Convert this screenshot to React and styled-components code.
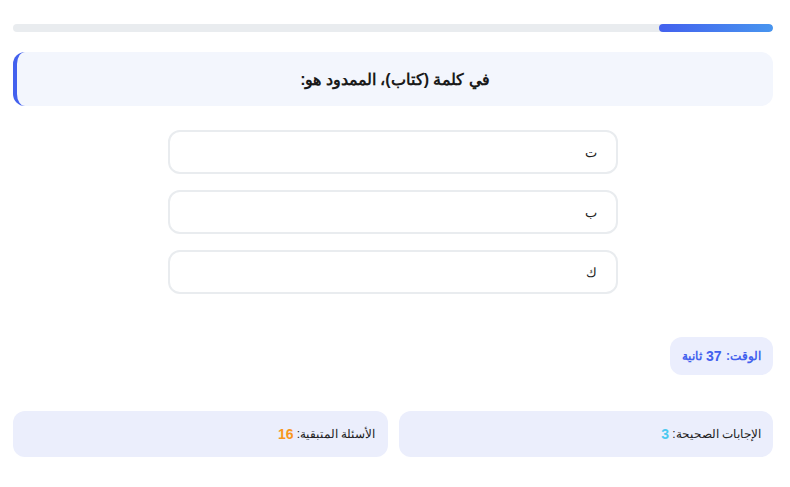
import React from "react";
import styled, { createGlobalStyle } from "styled-components";

const GlobalStyle = createGlobalStyle`
  body {
    margin: 0;
    background: #ffffff;
    font-family: "Liberation Sans", sans-serif;
    color: #222;
  }
`;

const Page = styled.div`
  direction: rtl;
  padding: 24px 17px 0 13px;
`;

const Track = styled.div`
  height: 8px;
  border-radius: 4px;
  background: #e9ecef;
  display: flex;
  overflow: hidden;
`;

const Fill = styled.div`
  height: 100%;
  border-radius: 4px;
  background: linear-gradient(to left, #4895ef, #4361ee);
`;

const Question = styled.div`
  margin-top: 20px;
  height: 54px;
  display: flex;
  align-items: center;
  justify-content: center;
  background: #f3f6fd;
  border-left: 4px solid #4361ee;
  border-radius: 12px;
  font-size: 16px;
  font-weight: bold;
  color: #1a1a1a;
`;

const Options = styled.div`
  width: 450px;
  margin: 24px auto 0;
  display: flex;
  flex-direction: column;
  gap: 16px;
`;

const Option = styled.button`
  height: 44px;
  box-sizing: border-box;
  border: 2px solid #e9ecef;
  border-radius: 12px;
  background: #fff;
  text-align: right;
  padding: 0 19px;
  font-family: inherit;
  font-size: 13px;
  color: #222;
  direction: rtl;
`;

const TimerRow = styled.div`
  margin-top: 43px;
  display: flex;
`;

const Timer = styled.div`
  height: 38px;
  padding: 0 12px;
  display: flex;
  align-items: center;
  background: #ebeefd;
  border-radius: 12px;
  font-size: 12px;
  font-weight: bold;
  color: #4361ee;
`;

const Num = styled.span`
  font-size: 14px;
  margin: 0 1px;
`;

const Stats = styled.div`
  margin-top: 36px;
  display: grid;
  grid-template-columns: 1fr 1fr;
  gap: 11px;
`;

const Stat = styled.div`
  height: 46px;
  display: flex;
  align-items: center;
  padding: 0 12px;
  background: #ebeefc;
  border-radius: 12px;
  font-size: 12px;
  color: #222;
`;

const Value = styled.span`
  font-size: 14px;
  font-weight: bold;
  color: ${(p) => p.$color};
`;

export default function App() {
  const progress = 15;
  const options = ["ت", "ب", "ك"];
  return (
    <>
      <GlobalStyle />
      <Page>
        <Track>
          <Fill style={{ width: `${progress}%` }} />
        </Track>
        <Question>في كلمة (كتاب)، الممدود هو:</Question>
        <Options>
          {options.map((o) => (
            <Option key={o}>{o}</Option>
          ))}
        </Options>
        <TimerRow>
          <Timer>
            الوقت:&nbsp;<Num>37</Num>&nbsp;ثانية
          </Timer>
        </TimerRow>
        <Stats>
          <Stat>
            الإجابات الصحيحة:&nbsp;<Value $color="#4cc9f0">3</Value>
          </Stat>
          <Stat>
            الأسئلة المتبقية:&nbsp;<Value $color="#f8961e">16</Value>
          </Stat>
        </Stats>
      </Page>
    </>
  );
}
